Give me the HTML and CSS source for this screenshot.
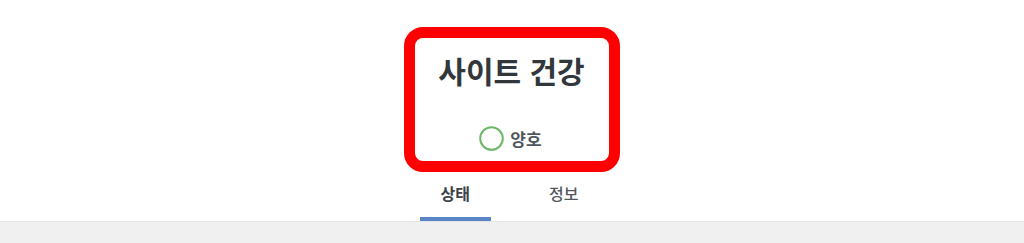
FILE: index.html
```html
<!DOCTYPE html>
<html lang="ko">
<head>
<meta charset="utf-8">
<title>사이트 건강</title>
<link rel="stylesheet" href="styles.css">
</head>
<body>
<header class="header">
  <div class="title-box">
    <h1 class="title">사이트 건강</h1>
    <div class="status">
      <svg class="ring" width="25" height="25" viewBox="0 0 25 25" aria-hidden="true">
        <circle cx="12.5" cy="12.5" r="11.3" fill="none" stroke="#6cb765" stroke-width="2"/>
      </svg>
      <span class="status-label">양호</span>
    </div>
  </div>
  <nav class="tabs">
    <a class="tab active" href="#">상태</a>
    <a class="tab" href="#">정보</a>
  </nav>
</header>
<main class="content"></main>
</body>
</html>
```
FILE: styles.css
```css
html, body {
  margin: 0;
  padding: 0;
  background: #f0f0f1;
  font-family: "Noto Sans CJK KR", "Noto Sans", sans-serif;
  color: #3c434a;
}

.header {
  background: #fff;
  border-bottom: 1px solid #e4e4e6;
  display: flex;
  flex-direction: column;
  align-items: center;
  padding-top: 27px;
  height: 194px;
}

.title-box {
  width: 194px;
  height: 124px;
  border: 11px solid #ff0000;
  border-radius: 19px;
  display: flex;
  flex-direction: column;
  align-items: center;
  margin-left: -1px;
}

.title {
  margin: 12px 0 0;
  font-size: 30px;
  line-height: 40px;
  font-weight: 700;
  color: #32373c;
  letter-spacing: 0;
}

.status {
  display: flex;
  align-items: center;
  gap: 6px;
  margin-top: 36px;
  margin-left: -2px;
}

.ring {
  display: block;
}

.status-label {
  font-size: 17px;
  line-height: 25px;
  font-weight: 700;
  color: #50575e;
}

.tabs {
  display: flex;
  gap: 37px;
  margin-top: 0;
  padding-right: 5px;
}

.tab {
  display: block;
  padding: 0 21px;
  height: 49px;
  line-height: 42px;
  font-size: 16px;
  font-weight: 500;
  color: #50575e;
  text-decoration: none;
  box-sizing: border-box;
}

.tab.active {
  font-weight: 700;
  color: #3c434a;
  box-shadow: inset 0 -4px #5b86c5;
}
```
